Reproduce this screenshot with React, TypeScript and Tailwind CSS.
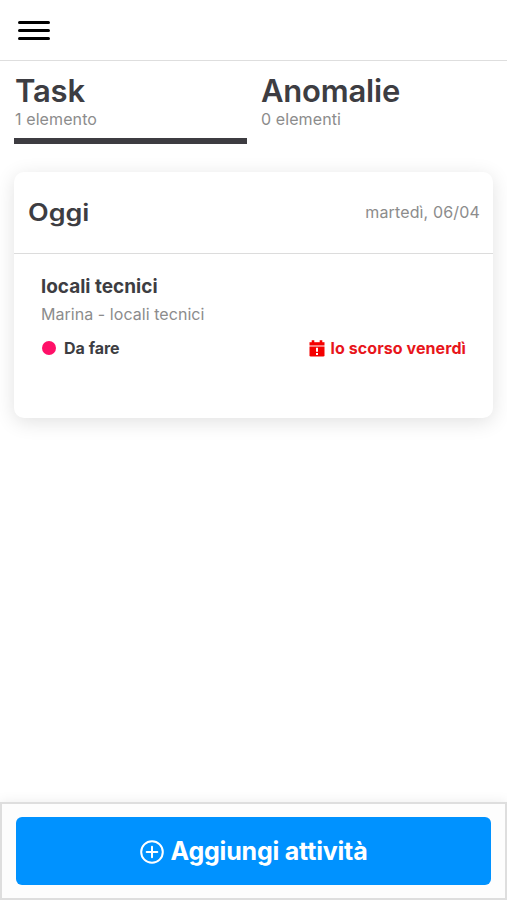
interface TabProps {
  title: string;
  count: string;
  active?: boolean;
}

function Tab({ title, count, active }: TabProps) {
  return (
    <button className={active ? "h-[73px] w-[233px] border-b-[6px] border-[#3d3c41] text-left" : "h-[73px] w-[233px] text-left"}>
      <span className="flex h-full flex-col pl-[1px]">
        <span className="mt-[1px] text-[31px] leading-[37px] font-semibold tracking-[-0.2px] text-[#3d3d42]">{title}</span>
        <span className="text-[16px] leading-5 tracking-[0.1px] text-[#8c8c8c]">{count}</span>
      </span>
    </button>
  );
}

function CalendarAlertIcon() {
  return (
    <svg width="16" height="17" viewBox="0 0 16 17" fill="none">
      <path d="M4 0.3V4M12 0.3V4" stroke="#f40000" strokeWidth="2.6" />
      <path d="M0.5 2.2h15v3.3h-15z" fill="#f40000" />
      <path d="M0.5 6.4h15v8.8a1.3 1.3 0 0 1-1.3 1.3H1.8a1.3 1.3 0 0 1-1.3-1.3z" fill="#f40000" />
      <path d="M8 7.8v4M8 13v2" stroke="#fff" strokeWidth="2" />
    </svg>
  );
}

function PlusCircleIcon() {
  return (
    <svg width="24" height="24" viewBox="0 0 24 24" fill="none" stroke="#fff" strokeWidth="2" strokeLinecap="round">
      <circle cx="12" cy="12" r="10.8" />
      <path d="M12 6.7v10.6M6.7 12h10.6" />
    </svg>
  );
}

export default function App() {
  return (
    <div className="flex h-screen flex-col overflow-hidden bg-white font-['Inter',sans-serif]">
      {/* Header */}
      <header className="h-[61px] shrink-0 border-b border-[#dedede] pt-[21px] pl-[18px]">
        <button aria-label="Menu" className="flex flex-col gap-[5px]">
          <span className="h-[3px] w-8 rounded-full bg-black" />
          <span className="h-[3px] w-8 rounded-full bg-black" />
          <span className="h-[3px] w-8 rounded-full bg-black" />
        </button>
      </header>

      {/* Tabs */}
      <nav className="flex shrink-0 gap-[13px] pt-[10px] pl-[14px]">
        <Tab title="Task" count="1 elemento" active />
        <Tab title="Anomalie" count="0 elementi" />
      </nav>

      <main className="flex-1 px-[14px] pt-[28px]">
        <section className="h-[246px] rounded-[10px] bg-white shadow-[0_4px_20px_rgba(0,0,0,0.12)]">
          <div className="flex h-[82px] items-center justify-between border-b border-[#dcdcdc] px-[14px]">
            <h2 className="origin-left scale-x-[1.12] text-[24px] font-semibold text-[#3d3d42]">Oggi</h2>
            <span className="-mr-px pb-[2px] text-[16px] tracking-[0.15px] text-[#8c8c8c]">martedì, 06/04</span>
          </div>
          <div className="px-[27px] pt-[21px]">
            <h3 className="text-[19px] leading-6 font-bold text-[#3d3d42]">locali tecnici</h3>
            <p className="mt-[5px] text-[16px] leading-5 tracking-[0.05px] text-[#8c8c8c]">Marina - locali tecnici</p>
            <div className="mt-[14px] flex items-center justify-between text-[16px] leading-5 font-bold">
              <span className="flex items-center gap-[8px] pl-[1px] text-[#3d3d42]">
                <span className="size-[14px] rounded-full bg-[#ff1068]" />
                Da fare
              </span>
              <span className="flex items-center gap-[6px] tracking-[0.08px] text-[#e8151b]">
                <CalendarAlertIcon />
                lo scorso venerdì
              </span>
            </div>
          </div>
        </section>
      </main>

      {/* Bottom action */}
      <footer className="h-[98px] shrink-0 border-2 border-[#dedede] bg-[#fdfdfd] px-[14px] pt-[13px] shadow-[0_0_12px_rgba(0,0,0,0.08)]">
        <button className="flex h-[68px] w-full items-center justify-center gap-[7px] rounded-[6px] bg-[#0092ff] pt-[2px] text-[25px] font-bold tracking-[-0.2px] text-white">
          <PlusCircleIcon />
          Aggiungi attività
        </button>
      </footer>
    </div>
  );
}
